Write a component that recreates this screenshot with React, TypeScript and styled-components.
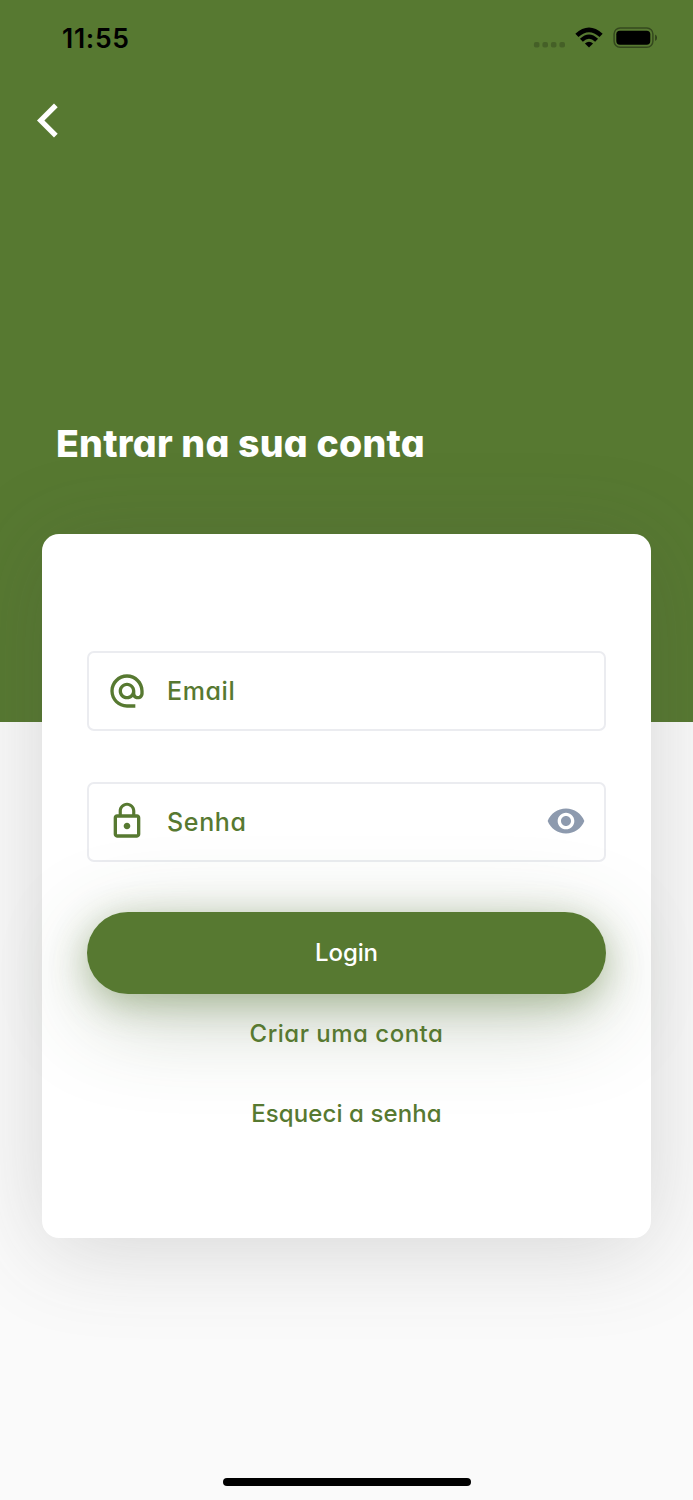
import React from "react";
import styled, { createGlobalStyle } from "styled-components";
import { MdAlternateEmail, MdLockOutline, MdVisibility } from "react-icons/md";

const green = "#577931";

const GlobalStyle = createGlobalStyle`
  *, *::before, *::after { box-sizing: border-box; }
  body { margin: 0; background: #fafafa; }
`;

const Screen = styled.main`
  width: 693px;
  height: 1500px;
  display: flex;
  flex-direction: column;
  align-items: center;
  overflow: hidden;
  background: #fafafa;
  color: ${green};
  font-family: Inter, "Open Sans", sans-serif;
  font-feature-settings: "cv11" 1;
`;

const Header = styled.header`
  width: 100%;
  height: 722px;
  flex: none;
  display: flex;
  flex-direction: column;
  background: ${green};
`;

const StatusBar = styled.div`
  height: 76px;
  padding: 0 36px 0 62px;
  display: flex;
  align-items: center;
  justify-content: space-between;
  color: #000;
`;

const Time = styled.span`
  font-size: 26.5px;
  font-weight: 600;
  line-height: 32px;
  letter-spacing: 0.7px;
  font-feature-settings: normal;
`;

const StatusIcons = styled.svg`
  width: 126px;
  height: 28px;
`;

const BackButton = styled.button`
  width: 24px;
  height: 36px;
  margin: 27px 0 0 36px;
  padding: 0;
  border: 0;
  background: none;
  color: #fff;
  svg { display: block; }
`;

const Title = styled.h1`
  margin: 280px 0 0 56px;
  font-size: 37.5px;
  font-weight: 800;
  line-height: 50px;
  letter-spacing: 0.25px;
  color: #fff;
  white-space: nowrap;
`;

const Card = styled.form`
  width: 609px;
  height: 704px;
  flex: none;
  margin-top: -188px;
  padding: 117px 45px 0;
  border-radius: 17px;
  background: #fff;
  box-shadow: 0 10px 94px rgba(72, 72, 72, 0.2);
  display: flex;
  flex-direction: column;
`;

const Field = styled.label`
  height: 80px;
  margin-bottom: 50.5px;
  padding: 0 18px;
  display: flex;
  align-items: center;
  border: 2px solid #ebecf0;
  border-radius: 7px;
  flex: none;
  svg { margin-bottom: 0.5px; }
`;

const FieldText = styled.span<{ $spacing: number }>`
  flex: 1;
  margin-left: 20px;
  font-size: 25px;
  font-weight: 500;
  line-height: 34px;
  letter-spacing: ${(p) => p.$spacing}px;
`;

const LoginButton = styled.button`
  height: 82px;
  flex: none;
  padding: 0 0 1px;
  border: 0;
  border-radius: 41px;
  background: ${green};
  color: #fff;
  font: inherit;
  font-feature-settings: inherit;
  font-size: 24px;
  font-weight: 500;
  letter-spacing: -0.1px;
  box-shadow: 0 9px 36px rgba(87, 121, 49, 0.42),
    0 22px 94px rgba(60, 90, 45, 0.28);
`;

const Link = styled.a<{ $spacing: number }>`
  height: 80px;
  padding-bottom: 1px;
  display: flex;
  align-items: center;
  justify-content: center;
  font-size: 24px;
  font-weight: 500;
  letter-spacing: ${(p) => p.$spacing}px;
`;

const HomeIndicator = styled.div`
  width: 248px;
  height: 8px;
  margin: auto 0 14px;
  border-radius: 4px;
  background: #000;
  flex: none;
`;

export default function App() {
  return (
    <Screen>
      <GlobalStyle />
      <Header>
        <StatusBar>
          <Time>11:55</Time>
          <StatusIcons viewBox="0 0 126 28" aria-hidden="true">
            <g fill="#000" fillOpacity="0.2">
              {[3, 11.5, 20, 28.5].map((x) => (
                <rect key={x} x={x - 0.1} y="18" width="5.6" height="5.6" rx="1.8" />
              ))}
            </g>
            <g fill="none" stroke="#000">
              <path d="M45.9 11.4Q58 0.2 70.1 11.4" strokeWidth="4.6" />
              <path d="M50.4 16.2Q58 9 65.6 16.2" strokeWidth="4.2" />
            </g>
            <path d="M58 23.6L53.9 19.4Q58 16 62.1 19.4Z" />
            <rect x="83.1" y="3.9" width="38.8" height="19.4" rx="6" fill="none" stroke="#000" strokeOpacity="0.4" strokeWidth="1.5" />
            <rect x="85.3" y="6.7" width="34" height="14" rx="3.6" />
            <path d="M124.2 10.5Q126 11.4 126 13.7T124.2 17Z" fillOpacity="0.5" />
          </StatusIcons>
        </StatusBar>
        <BackButton type="button" aria-label="Voltar">
          <svg width="24" height="36" viewBox="0 0 24 36">
            <path d="M1 17.5L18 .5L21.7 4.2L8.4 17.5L21.7 30.8L18 34.5Z" fill="currentColor" />
          </svg>
        </BackButton>
        <Title>Entrar na sua conta</Title>
      </Header>
      <Card>
        <Field>
          <MdAlternateEmail size={40} />
          <FieldText $spacing={0.6}>Email</FieldText>
        </Field>
        <Field>
          <MdLockOutline size={40} />
          <FieldText $spacing={0.65}>Senha</FieldText>
          <MdVisibility size={40} color="#8d9aae" />
        </Field>
        <LoginButton type="button">Login</LoginButton>
        <Link $spacing={0.5}>Criar uma conta</Link>
        <Link $spacing={0.1}>Esqueci a senha</Link>
      </Card>
      <HomeIndicator />
    </Screen>
  );
}
